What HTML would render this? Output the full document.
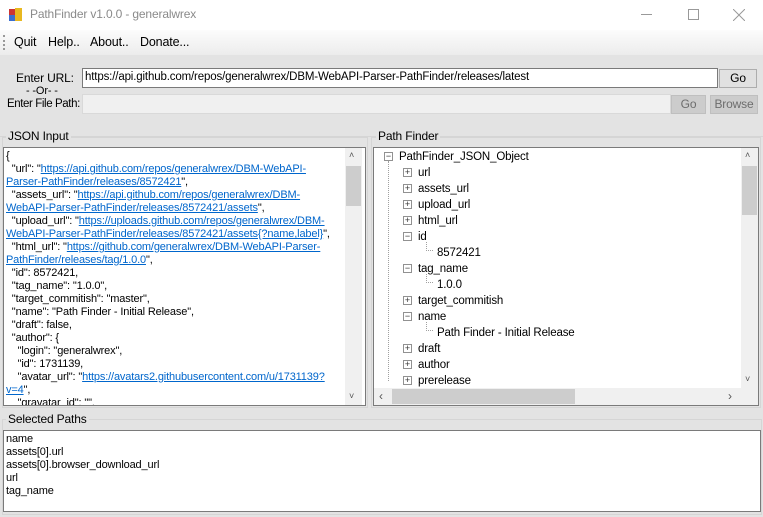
<!DOCTYPE html>
<html><head><meta charset="utf-8"><style>
*{margin:0;padding:0;box-sizing:border-box}
body{width:763px;height:517px;background:#e3e3e3;font-family:"Liberation Sans",Arial,sans-serif;font-size:11px;letter-spacing:-0.15px;color:#000;position:relative;overflow:hidden}
.a{position:absolute;white-space:nowrap}
.tb{background:#fff;border:1px solid #7a7a7a}
.btn{position:absolute;background:#e1e1e1;border:1px solid #adadad;text-align:center;line-height:16px;font-size:12px}
.dis{background:#cccccc;border-color:#bfbfbf;color:#6d6d6d}
a{color:#0066cc;text-decoration:underline}
.json div{height:13px;line-height:13px}
.tree .r{position:absolute;height:16px;line-height:16px;font-size:11.5px}
.pm{position:absolute;width:9px;height:9px;border:1px solid #919191;background:#fff;font-size:9px;line-height:7px;text-align:center;color:#333;letter-spacing:0}
.sb{position:absolute;background:#f0f0f0}
.grp{position:absolute;border:1px solid #d5d5d5}
</style></head><body>
<div class="a" style="left:0;top:0;width:763px;height:30px;background:#fff"></div>
<div class="a" style="left:9px;top:9px;width:6px;height:6px;background:#c33"></div>
<div class="a" style="left:15px;top:8px;width:7px;height:7px;background:#e8b820"></div>
<div class="a" style="left:9px;top:15px;width:6px;height:6px;background:#3a6ed0"></div>
<div class="a" style="left:15px;top:15px;width:7px;height:6px;background:#e8b820"></div>
<div class="a" style="left:30px;top:7px;font-size:12px;color:#8a8a8a">PathFinder v1.0.0 - generalwrex</div>
<div class="a" style="left:641px;top:14px;width:11px;height:1px;background:#999"></div>
<div class="a" style="left:688px;top:9px;width:11px;height:11px;border:1px solid #999"></div>
<svg class="a" style="left:733px;top:9px" width="12" height="12"><path d="M0 0L12 12M12 0L0 12" stroke="#999" stroke-width="1"/></svg>
<div class="a" style="left:0;top:30px;width:763px;height:25px;background:linear-gradient(#fcfcfc,#ececec)"></div>
<div class="a" style="left:3px;top:35px;width:1px;height:15px;border-left:2px dotted #999"></div>
<div class="a" style="left:14px;top:35px;font-size:12.5px">Quit</div>
<div class="a" style="left:48px;top:35px;font-size:12.5px">Help..</div>
<div class="a" style="left:90px;top:35px;font-size:12.5px">About..</div>
<div class="a" style="left:140px;top:35px;font-size:12.5px">Donate...</div>
<div class="a" style="left:16px;top:71px;font-size:12px">Enter URL:</div>
<div class="a tb" style="left:82px;top:68px;width:636px;height:20px;padding:2px 2px;font-size:11.5px">https://api.github.com/repos/generalwrex/DBM-WebAPI-Parser-PathFinder/releases/latest</div>
<div class="btn" style="left:719px;top:69px;width:38px;height:19px">Go</div>
<div class="a" style="left:26px;top:85px;font-size:11px">- -Or- -</div>
<div class="a" style="left:82px;top:94px;width:589px;height:20px;background:#f0f0f0;border:1px solid #d9d9d9"></div>
<div class="a" style="left:7px;top:98px;font-size:11.5px;letter-spacing:-0.4px">Enter File Path:</div>
<div class="btn dis" style="left:671px;top:95px;width:35px;height:19px">Go</div>
<div class="btn dis" style="left:710px;top:95px;width:48px;height:19px">Browse</div>
<div class="a" style="left:0;top:136px;width:763px;height:1px;background:#d5d5d5"></div>
<div class="grp" style="left:2px;top:137px;width:366px;height:271px"></div>
<div class="a" style="left:6px;top:129px;padding:0 2px;background:#e3e3e3;font-size:12px">JSON Input</div>
<div class="a tb json" style="left:3px;top:147px;width:363px;height:259px;padding:2px 0 0 2px;overflow:hidden;white-space:nowrap">
<div>{</div>
<div>&nbsp;&nbsp;"url": "<a>https://api.github.com/repos/generalwrex/DBM-WebAPI-</a></div>
<div><a>Parser-PathFinder/releases/8572421</a>",</div>
<div>&nbsp;&nbsp;"assets_url": "<a>https://api.github.com/repos/generalwrex/DBM-</a></div>
<div><a>WebAPI-Parser-PathFinder/releases/8572421/assets</a>",</div>
<div>&nbsp;&nbsp;"upload_url": "<a>https://uploads.github.com/repos/generalwrex/DBM-</a></div>
<div><a>WebAPI-Parser-PathFinder/releases/8572421/assets{?name,label}</a>",</div>
<div>&nbsp;&nbsp;"html_url": "<a>https://github.com/generalwrex/DBM-WebAPI-Parser-</a></div>
<div><a>PathFinder/releases/tag/1.0.0</a>",</div>
<div>&nbsp;&nbsp;"id": 8572421,</div>
<div>&nbsp;&nbsp;"tag_name": "1.0.0",</div>
<div>&nbsp;&nbsp;"target_commitish": "master",</div>
<div>&nbsp;&nbsp;"name": "Path Finder - Initial Release",</div>
<div>&nbsp;&nbsp;"draft": false,</div>
<div>&nbsp;&nbsp;"author": {</div>
<div>&nbsp;&nbsp;&nbsp;&nbsp;"login": "generalwrex",</div>
<div>&nbsp;&nbsp;&nbsp;&nbsp;"id": 1731139,</div>
<div>&nbsp;&nbsp;&nbsp;&nbsp;"avatar_url": "<a>https://avatars2.githubusercontent.com/u/1731139?</a></div>
<div><a>v=4</a>",</div>
<div>&nbsp;&nbsp;&nbsp;&nbsp;"gravatar_id": "",</div>
</div>
<div class="sb" style="left:345px;top:148px;width:17px;height:257px"></div>
<div class="a" style="left:346px;top:166px;width:15px;height:40px;background:#cdcdcd"></div>
<div class="a" style="left:349px;top:150px;font-size:9px;color:#555">&#x2C4;</div>
<div class="a" style="left:349px;top:391px;font-size:9px;color:#555">&#x2C5;</div>
<div class="grp" style="left:371px;top:137px;width:390px;height:271px"></div>
<div class="a" style="left:376px;top:129px;padding:0 2px;background:#e3e3e3;font-size:12px">Path Finder</div>
<div class="a tb tree" style="left:373px;top:147px;width:386px;height:259px;overflow:hidden">
<div class="a" style="left:14px;top:13px;height:220px;border-left:1px dotted #a0a0a0"></div>
<div class="a" style="left:52px;top:94px;width:7px;height:9px;border-left:1px dotted #a0a0a0;border-bottom:1px dotted #a0a0a0"></div>
<div class="a" style="left:52px;top:126px;width:7px;height:9px;border-left:1px dotted #a0a0a0;border-bottom:1px dotted #a0a0a0"></div>
<div class="a" style="left:52px;top:174px;width:7px;height:9px;border-left:1px dotted #a0a0a0;border-bottom:1px dotted #a0a0a0"></div>
<div class="pm" style="left:10px;top:4px">−</div><div class="r" style="left:25px;top:1px">PathFinder_JSON_Object</div>
<div class="pm" style="left:29px;top:20px">+</div><div class="r" style="left:44px;top:17px">url</div>
<div class="pm" style="left:29px;top:36px">+</div><div class="r" style="left:44px;top:33px">assets_url</div>
<div class="pm" style="left:29px;top:52px">+</div><div class="r" style="left:44px;top:49px">upload_url</div>
<div class="pm" style="left:29px;top:68px">+</div><div class="r" style="left:44px;top:65px">html_url</div>
<div class="pm" style="left:29px;top:84px">−</div><div class="r" style="left:44px;top:81px">id</div>
<div class="r" style="left:63px;top:97px">8572421</div>
<div class="pm" style="left:29px;top:116px">−</div><div class="r" style="left:44px;top:113px">tag_name</div>
<div class="r" style="left:63px;top:129px">1.0.0</div>
<div class="pm" style="left:29px;top:148px">+</div><div class="r" style="left:44px;top:145px">target_commitish</div>
<div class="pm" style="left:29px;top:164px">−</div><div class="r" style="left:44px;top:161px">name</div>
<div class="r" style="left:63px;top:177px">Path Finder - Initial Release</div>
<div class="pm" style="left:29px;top:196px">+</div><div class="r" style="left:44px;top:193px">draft</div>
<div class="pm" style="left:29px;top:212px">+</div><div class="r" style="left:44px;top:209px">author</div>
<div class="pm" style="left:29px;top:228px">+</div><div class="r" style="left:44px;top:225px">prerelease</div>
</div>
<div class="sb" style="left:741px;top:148px;width:17px;height:240px"></div>
<div class="a" style="left:742px;top:166px;width:15px;height:49px;background:#cdcdcd"></div>
<div class="a" style="left:745px;top:150px;font-size:9px;color:#555">&#x2C4;</div>
<div class="a" style="left:745px;top:374px;font-size:9px;color:#555">&#x2C5;</div>
<div class="sb" style="left:374px;top:388px;width:384px;height:17px"></div>
<div class="a" style="left:392px;top:389px;width:183px;height:15px;background:#cdcdcd"></div>
<div class="a" style="left:379px;top:389px;font-size:12px;color:#555">&lsaquo;</div>
<div class="a" style="left:728px;top:389px;font-size:12px;color:#555">&rsaquo;</div>
<div class="grp" style="left:2px;top:419px;width:760px;height:96px"></div>
<div class="a" style="left:6px;top:412px;padding:0 2px;background:#e3e3e3;font-size:12px">Selected Paths</div>
<div class="a tb json" style="left:3px;top:430px;width:758px;height:82px;padding:2px 0 0 2px">
<div>name</div><div>assets[0].url</div><div>assets[0].browser_download_url</div><div>url</div><div>tag_name</div>
</div>
</body></html>
